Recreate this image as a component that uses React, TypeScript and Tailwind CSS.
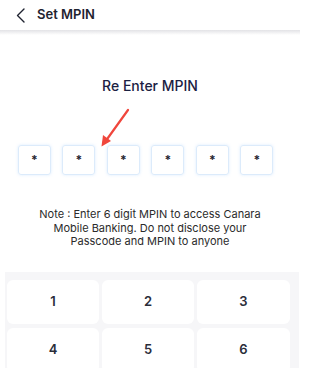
import React from "react";

const keys = ["1", "2", "3", "4", "5", "6", "7", "8", "9"];

export default function App() {
  return (
    <div className="w-[300px] h-[368px] overflow-hidden bg-white font-['Inter',sans-serif]">
      {/* header */}
      <div className="h-[30px] flex items-center pl-[16px] gap-[12px]">
        <svg width="9" height="15" viewBox="0 0 9 15" fill="none">
          <path d="M8 1L1.5 7.5L8 14" stroke="#1f2330" strokeWidth="1.4" strokeLinecap="round" strokeLinejoin="round" />
        </svg>
        <span className="text-[13px] font-semibold text-[#1f2330]">Set MPIN</span>
      </div>
      <div className="h-[5px] bg-gradient-to-b from-[#e3e3e6] to-white" />

      <div className="pt-[41px] leading-[20px] text-center text-[14px] font-medium text-[#1b2142]">Re Enter MPIN</div>

      {/* pin boxes */}
      <div className="relative mt-[49px] flex justify-center gap-[11.5px] pr-[9px]">
        {Array.from({ length: 6 }).map((_, i) => (
          <div
            key={i}
            className="w-[33px] h-[30px] rounded-[3px] border border-[#dcebfb] shadow-[0_0_3px_rgba(147,197,253,0.35)] flex items-center justify-center text-[12px] font-bold text-[#1f2330]"
          >
            *
          </div>
        ))}
        <svg className="absolute left-[98px] top-[-38px]" width="34" height="42" viewBox="0 0 34 42" fill="none">
          <path d="M30 3L7 35" stroke="#f0463c" strokeWidth="2.2" strokeLinecap="round" />
          <path d="M3.5 39.5L5 28L13 34Z" fill="#f0463c" />
        </svg>
      </div>

      <p className="mt-[33px] px-[30px] text-center text-[11px] leading-[13.5px] text-[#2b2b2b]">
        Note : Enter 6 digit MPIN to access Canara
        <br />
        Mobile Banking. Do not disclose your
        <br />
        Passcode and MPIN to anyone
      </p>

      {/* keypad */}
      <div className="mt-[23px] ml-[5px] w-[294px] bg-[#f6f6f8] pt-[8px] pl-[2px] grid grid-cols-[92px_92px_93px] gap-x-[3px] gap-y-[4px]">
        {keys.map((k) => (
          <div key={k} className="h-[44px] rounded-[6px] bg-white flex items-center justify-center text-[13px] font-semibold text-[#2a2d3a]">
            {k}
          </div>
        ))}
      </div>
    </div>
  );
}
